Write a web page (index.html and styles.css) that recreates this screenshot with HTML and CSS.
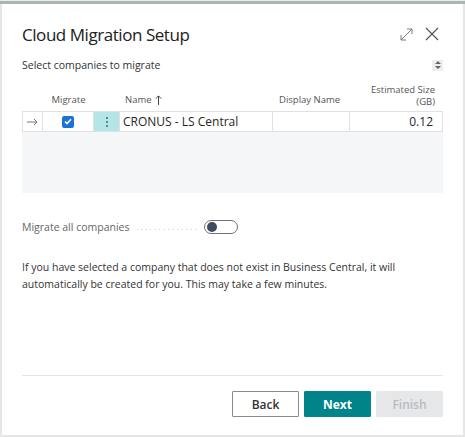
FILE: index.html
```html
<!DOCTYPE html>
<html>
<head>
<meta charset="utf-8">
<link rel="stylesheet" href="styles.css">
</head>
<body>
<div class="dialog">
  <div class="topbar"></div>
  <div class="content">
    <div class="header">
      <h1 class="title">Cloud Migration Setup</h1>
      <div class="header-icons">
        <svg class="icon-expand" width="13" height="13" viewBox="0 0 13 13"><path d="M1 12 L12 1 M7 1 H12 V6 M1 7 V12 H6" fill="none" stroke="#7a7a7a" stroke-width="1"/></svg>
        <svg class="icon-close" width="14" height="14" viewBox="0 0 14 14"><path d="M1 1 L13 13 M13 1 L1 13" fill="none" stroke="#555" stroke-width="1.2"/></svg>
      </div>
    </div>
    <div class="subhead">
      <span class="subtitle">Select companies to migrate</span>
      <span class="sorter"><svg width="6" height="8" viewBox="0 0 6 8"><path d="M3 0 L6 3 H0 Z M3 8 L0 5 H6 Z" fill="#666"/></svg></span>
    </div>

    <div class="table">
      <div class="th"></div>
      <div class="th center">Migrate</div>
      <div class="th"></div>
      <div class="th name">Name <svg class="arrow-up" width="7" height="10" viewBox="0 0 7 10"><path d="M3.5 10 V1 M0.8 3.6 L3.5 0.9 L6.2 3.6" fill="none" stroke="#444" stroke-width="1"/></svg></div>
      <div class="th display">Display Name</div>
      <div class="th right">Estimated Size<br>(GB)</div>

      <div class="td first arrow-cell"><svg width="11" height="8" viewBox="0 0 11 8"><path d="M0 4 H10 M7 1 L10 4 L7 7" fill="none" stroke="#777" stroke-width="1"/></svg></div>
      <div class="td center"><span class="checkbox"><svg width="8" height="7" viewBox="0 0 8 7"><path d="M1 3.5 L3 5.5 L7 1.2" fill="none" stroke="#fff" stroke-width="1.6"/></svg></span></div>
      <div class="td menu-cell"><span class="dots"><i></i><i></i><i></i></span></div>
      <div class="td text">CRONUS - LS Central</div>
      <div class="td"></div>
      <div class="td right num">0.12</div>
    </div>
    <div class="empty-area"></div>

    <div class="toggle-row">
      <span class="toggle-label">Migrate all companies</span>
      <span class="leader"></span>
      <span class="toggle"><span class="knob"></span></span>
    </div>

    <p class="info">If you have selected a company that does not exist in Business Central, it will automatically be created for you. This may take a few minutes.</p>

    <div class="spacer"></div>
    <div class="footer">
      <button class="btn btn-back">Back</button>
      <button class="btn btn-next">Next</button>
      <button class="btn btn-finish">Finish</button>
    </div>
  </div>
</div>
</body>
</html>
```

FILE: styles.css
```css
html, body {
  margin: 0;
  padding: 0;
  background: #ffffff;
}
body {
  font-family: "Open Sans", "Noto Sans", sans-serif;
  color: #333333;
}
.dialog {
  width: 465px;
  height: 437px;
  box-sizing: border-box;
  border: 2px solid #e6e6e6;
  border-top: 1px solid #ececec;
  display: flex;
  flex-direction: column;
  background: #ffffff;
}
.topbar {
  height: 3px;
  background: #a9b6b4;
  margin: 0 -2px;
}
.content {
  flex: 1;
  display: flex;
  flex-direction: column;
  padding: 0 20px 18px 20px;
}
.header {
  display: flex;
  align-items: center;
  justify-content: space-between;
  margin-top: 18px;
  height: 24px;
}
.title {
  margin: 0;
  font-size: 17px;
  font-weight: 400;
  color: #212121;
  letter-spacing: -0.45px;
}
.header-icons {
  display: flex;
  align-items: center;
  gap: 12px;
  margin-right: 4px;
}
.subhead {
  display: flex;
  justify-content: space-between;
  align-items: center;
  margin-top: 12px;
  height: 14px;
}
.subtitle {
  font-size: 10.5px;
  color: #333;
}
.sorter {
  width: 11px;
  height: 11px;
  background: #eeeeee;
  display: flex;
  align-items: center;
  justify-content: center;
}
.table {
  margin-top: 13px;
  display: grid;
  grid-template-columns: 21px 51px 26px 153px 77px 1fr;
  font-size: 10px;
}
.th {
  color: #555;
  font-size: 9.5px;
  line-height: 12px;
  height: 26px;
  display: flex;
  align-items: flex-end;
  padding-bottom: 5px;
  box-sizing: border-box;
}
.th.center { justify-content: center; }
.th.name { padding-left: 5px; }
.th.display { padding-left: 6px; }
.th.right { justify-content: flex-end; text-align: right; padding-right: 8px; padding-bottom: 3px; }
.arrow-up { margin-left: 3px; margin-bottom: 1px; }
.td {
  height: 21px;
  box-sizing: border-box;
  border-top: 1px solid #e1e1e1;
  border-bottom: 1px solid #e1e1e1;
  border-right: 1px solid #e1e1e1;
  display: flex;
  align-items: center;
}
.td.first { border-left: 1px solid #e1e1e1; }
.td.center { justify-content: center; }
.arrow-cell { justify-content: center; }
.td.text { font-size: 12px; padding-left: 3px; color: #262626; }
.td.right { justify-content: flex-end; padding-right: 9px; }
.td.num { font-size: 12px; color: #262626; }
.checkbox {
  width: 12px;
  height: 12px;
  background: #1a73d9;
  border-radius: 2px;
  display: flex;
  align-items: center;
  justify-content: center;
}
.menu-cell {
  background: #b4e6e8;
  justify-content: center;
}
.dots {
  display: flex;
  flex-direction: column;
  gap: 2px;
}
.dots i {
  width: 2px;
  height: 2px;
  background: #3d6b70;
  border-radius: 1px;
  display: block;
}
.empty-area {
  height: 61px;
  background: #f5f6f8;
}
.toggle-row {
  display: flex;
  align-items: center;
  margin-top: 26px;
  height: 16px;
}
.toggle-label {
  font-size: 10.5px;
  color: #666;
}
.leader {
  width: 64px;
  margin-left: 6px;
  margin-right: 5px;
  height: 1px;
  margin-top: 5px;
  background-image: radial-gradient(circle, #c4c4c4 0.6px, transparent 0.7px);
  background-size: 4.5px 1px;
}
.toggle {
  width: 30px;
  height: 12px;
  border: 1px solid #707070;
  border-radius: 8px;
  display: flex;
  align-items: center;
  padding-left: 2px;
}
.knob {
  width: 10px;
  height: 10px;
  background: #3f4b5e;
  border-radius: 50%;
}
.info {
  margin: 24px 0 0 0;
  font-size: 10.5px;
  line-height: 17px;
  color: #333;
}
.spacer { flex: 1; }
.footer {
  border-top: 1px solid #e6e6e6;
  padding-top: 15px;
  display: flex;
  justify-content: flex-end;
  gap: 5px;
}
.btn {
  width: 67px;
  height: 26px;
  font-family: "Open Sans", "Noto Sans", sans-serif;
  font-size: 12px;
  font-weight: 600;
  border-radius: 1px;
  box-sizing: border-box;
  margin: 0;
  padding: 0;
}
.btn-back {
  background: #fff;
  border: 1px solid #8a8a8a;
  color: #333;
}
.btn-next {
  background: #008489;
  border: 1px solid #008489;
  color: #fff;
  font-weight: 700;
}
.btn-finish {
  background: #e6e7e9;
  border: 1px solid #e6e7e9;
  color: #b8bcc2;
}
```
